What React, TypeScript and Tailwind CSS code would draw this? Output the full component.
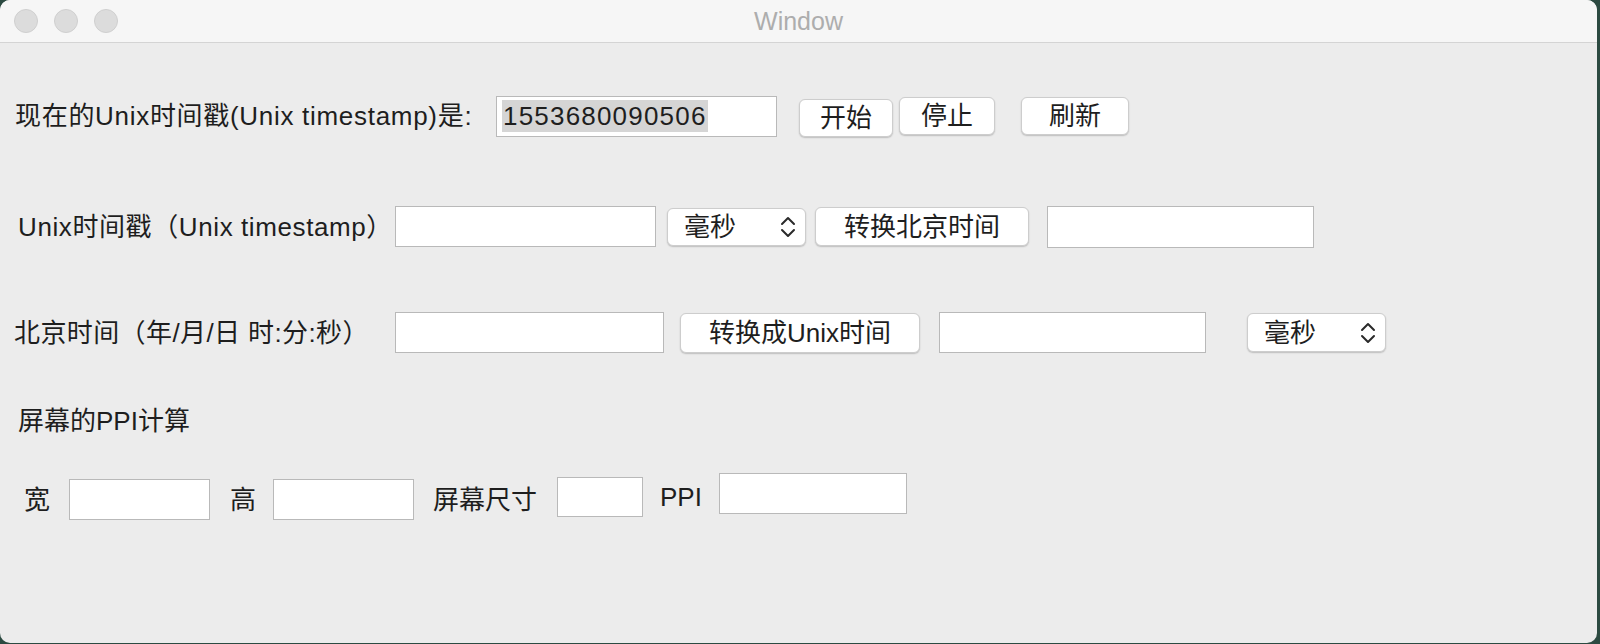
import React from "react";

const font = "font-['Liberation_Sans','Noto_Sans_CJK_SC',sans-serif]";

function Field({ className = "" }: { className?: string }) {
  return <div className={`bg-white border border-[#b9b9b9] ${className}`} />;
}

function Button({ label, className = "" }: { label: string; className?: string }) {
  return (
    <div
      className={`flex items-center justify-center bg-white rounded-[6px] border border-[#cdcdcd] shadow-[0_1px_1.5px_rgba(0,0,0,0.2)] text-[#1e1e1e] ${className}`}
    >
      {label}
    </div>
  );
}

function Select({ className = "" }: { className?: string }) {
  return (
    <div
      className={`flex items-center justify-between pl-[16px] pr-[9px] bg-white rounded-[6px] border border-[#cdcdcd] shadow-[0_1px_1.5px_rgba(0,0,0,0.2)] text-[#1e1e1e] ${className}`}
    >
      <span>毫秒</span>
      <svg width="16" height="28" viewBox="0 0 16 28" fill="none" stroke="#2a2a2a" strokeWidth="2" strokeLinecap="round" strokeLinejoin="round">
        <path d="M2 11 L8 5 L14 11" />
        <path d="M2 17 L8 23 L14 17" />
      </svg>
    </div>
  );
}

export default function App() {
  return (
    <div className={`w-[1600px] h-[644px] bg-[#2c4a41] overflow-hidden ${font}`}>
      <div className="w-[1597px] h-[643px] bg-[#ececec] rounded-[10px] overflow-hidden flex flex-col text-[26px] text-[#1e1e1e]">
        {/* title bar */}
        <div className="relative h-[43px] shrink-0 bg-[#f6f6f6] border-b border-[#d4d4d4] flex items-center pl-[14px] gap-[16px]">
          <span className="w-[24px] h-[24px] rounded-full bg-[#dcdcdc] border border-[#cfcfcf]" />
          <span className="w-[24px] h-[24px] rounded-full bg-[#dcdcdc] border border-[#cfcfcf]" />
          <span className="w-[24px] h-[24px] rounded-full bg-[#dcdcdc] border border-[#cfcfcf]" />
          <div className="absolute inset-0 flex items-center justify-center text-[#adadad] text-[25px] leading-none pointer-events-none">
            Window
          </div>
        </div>

        {/* row 1 */}
        <div className="flex items-center h-[42px] mt-[52px] pl-[15px] leading-none">
          <span className="w-[481px] tracking-[0.7px]">现在的Unix时间戳(Unix timestamp)是:</span>
          <div className="w-[281px] h-[41px] bg-white border border-[#b9b9b9] flex items-center pl-[5px]">
            <span className="bg-[#d5d5d5] h-[32px] flex items-center px-[1px] tracking-[1.2px]">1553680090506</span>
          </div>
          <Button label="开始" className="ml-[22px] w-[94px] h-[38px] mt-[4px]" />
          <Button label="停止" className="ml-[6px] w-[96px] h-[38px]" />
          <Button label="刷新" className="ml-[26px] w-[108px] h-[38px]" />
        </div>

        {/* row 2 */}
        <div className="flex items-center h-[43px] mt-[68px] pl-[18px] leading-none">
          <span className="w-[377px] tracking-[0.6px]">Unix时间戳（Unix timestamp）</span>
          <Field className="w-[261px] h-[41px]" />
          <Select className="ml-[11px] w-[139px] h-[38px]" />
          <Button label="转换北京时间" className="ml-[9px] w-[214px] h-[39px]" />
          <Field className="ml-[18px] w-[267px] h-[42px]" />
        </div>

        {/* row 3 */}
        <div className="flex items-center h-[43px] mt-[63px] pl-[14px] leading-none">
          <span className="w-[381px] tracking-[0.4px]">北京时间（年/月/日 时:分:秒）</span>
          <Field className="w-[269px] h-[41px]" />
          <Button label="转换成Unix时间" className="ml-[16px] w-[240px] h-[40px]" />
          <Field className="ml-[19px] w-[267px] h-[41px]" />
          <Select className="ml-[41px] w-[139px] h-[39px]" />
        </div>

        {/* row 4 */}
        <div className="mt-[52px] pl-[18px] h-[30px] flex items-center leading-none">屏幕的PPI计算</div>

        {/* row 5 */}
        <div className="flex items-start mt-[37px] pl-[24px] leading-none">
          <span className="w-[45px] h-[41px] mt-[6px] flex items-center">宽</span>
          <Field className="w-[141px] h-[41px] mt-[6px]" />
          <span className="ml-[20px] w-[43px] h-[41px] mt-[6px] flex items-center">高</span>
          <Field className="w-[141px] h-[41px] mt-[6px]" />
          <span className="ml-[19px] w-[124px] h-[41px] mt-[6px] flex items-center">屏幕尺寸</span>
          <Field className="w-[86px] h-[40px] mt-[4px]" />
          <span className="ml-[17px] w-[59px] h-[41px] mt-[3px] flex items-center">PPI</span>
          <Field className="w-[188px] h-[41px]" />
        </div>
      </div>
    </div>
  );
}
